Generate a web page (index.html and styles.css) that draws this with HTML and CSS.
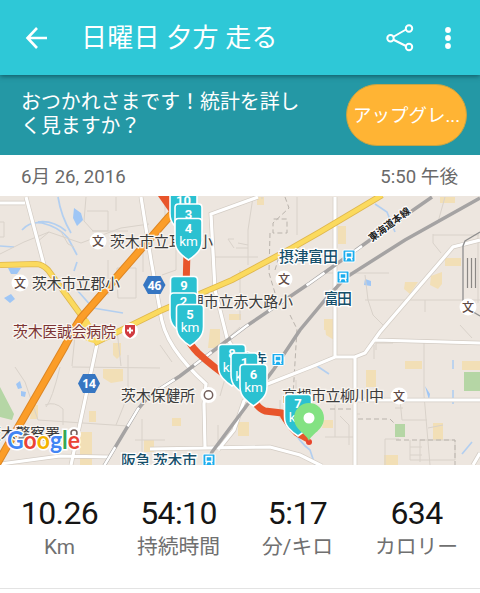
FILE: index.html
```html
<!DOCTYPE html>
<html lang="ja">
    <head>
        <meta charset="utf-8" />
        <meta name="viewport" content="width=device-width, initial-scale=1" />
        <title>日曜日 夕方 走る</title>
        <link rel="stylesheet" href="styles.css">
    </head>
    <body>
        <header class="app-bar">
            <svg class="back" width="24" height="24" viewBox="0 0 24 24">
                <path d="M22 12H3M12 2L2.500 12l9.500 10" />
            </svg>
            <h1>日曜日 夕方 走る</h1>
            <svg class="share" width="28" height="28" viewBox="0 0 28 28">
                <path d="M7 13l13-7.500M7 15.500l13 6.500" />
                <circle cx="4.500" cy="14.200" r="3.200" />
                <circle cx="23" cy="4.500" r="3.200" />
                <circle cx="23" cy="23" r="3.200" />
            </svg>
            <svg class="more" width="8" height="24" viewBox="0 0 8 24">
                <circle cx="4" cy="4" r="2.900" />
                <circle cx="4" cy="12" r="2.900" />
                <circle cx="4" cy="20" r="2.900" />
            </svg>
        </header>

        <section class="banner">
            <p>おつかれさまです！統計を詳し<br>く見ますか？</p>
            <button class="upgrade">アップグレ<span>...</span></button>
        </section>

        <div class="date-row">
            <span>6月 26, 2016</span>
            <span>5:50 午後</span>
        </div>

        <svg class="map" width="480" height="269" viewBox="0 196 480 269">
            <defs>
                <path id="pin" d="M-10-41.500h20q3.500 0 3.500 3.500v18.500q0 7-4 11.500-4 4.500-9.500 8-5.500-3.500-9.500-8-4-4.500-4-11.500v-18.500q0-3.500 3.500-3.500z" />
                <g id="school">
                    <circle r="8.500" fill="#fff" />
                    <text class="school-text" y="4.500">文</text>
                </g>
                <g id="station">
                    <rect x="-6" y="-6" width="12" height="12" rx="1" fill="#1badee" stroke="#fff" />
                    <path d="M-3.200 4.500l1.200-2.500M3.200 4.500L2 2M-3-3.500h6v5h-6z" fill="none" stroke="#fff" stroke-width="1.400" />
                </g>
            </defs>

            <!-- parks, blocks and water -->
            <path class="park" d="M0 387l14 27-2 6-12-3zM464 372h16v19h-16zM395 424h10v13h-10z" />
            <path class="block" d="M113 343h8v12l-4 4-4-4zM103 369h20v12l-12 2-8-5zM80 432h12v33H80zM32 405h6v14h-8zM210 329h10v19h-12zM172 418h9v8h-9zM238 422h11v14h-11zM366 370h10v17h-10zM405 361h17v8h-17zM462 361h18v9h-18zM433 423h10v17h-10zM384 455h14v10h-14zM445 258h16v8h-16zM431 276l11-4v12l-4 5-8-4zM405 282h13l-8 12-6-5zM338 226h8v18h-8zM440 197h15v6h-15zM229 314h12v6h-12zM257 197h7v8h-7zM324 319h10v11h-10zM325 325h9v15l-8-5zM324 420h9v8h-11zM144 440h10v12h-10zM89 411h7v11h-7z" />
            <path class="lake" d="M74 208l7 5 2 7-6 6-4-8zM8 268h13l-4 6h-6zM4 298l7-4 4 5-5 4zM365 279l6 2v5l-7-1zM16 384l4-3 2 7-4 1zM21 391l5 1-1 5-4-1zM425 386l5 8-1 6z" />
            <path class="stream" d="M22 230q8-9 20-7q17 4 26 15l9 17M38 222q15-2 28 9M58 197q3 19 13 36M77 262l-3 9M77 290l16 18 30 5M0 246l14 1M375 204l12 8 8 20M453 360v9M453 390v14M317 366l12 8M462 454l10-12M290 425q10 18 20 25l5 15" />

            <!-- side streets -->
            <path class="street" d="M0 254l24-12 25-10 32 11 40-15 28-4M49 232l-12 10M86 197l-2 24 9 10h15v-20h-21M116 197v14M92 231h36M108 260v35M117 278v-10h19v30h-18zM143 245v27M0 222h4v15H0M60 230l8 14 6 3M76 325l-4 41M72 367l88 1M60 367q-8 33-14 40M38 420l90 6M128 355v40l-12 30M117 330l4 36M15 367l10 15 13 38M45 405q10-4 18 4v16M142 419v46M135 440h30M165 197v24M176 230v40l-14 5M253 197l-5 33v35M238 243l10 2M236 248h12M234 239h-6l6 9M297 197v38M212 257h46M240 270v50M365 300h115M365 275l3 25 5 15 13 13M326 273h63M433 235h46M433 234v9l8 10M478 233v70M425 300v12M460 325l12 13M424 343v52l6 70M374 345v14M393 343h-17v7M445 197l-7 25M400 400l2 20h25M395 408h8M428 428l15-3M385 439v26M385 439h14M410 440v20M420 440v22M410 447h12M410 455h12M410 460h45v-20h-36M360 414h-6M340 416l9 9v20M325 437h30M335 405v32M218 425v20M245 350v15l20 12M262 197v2M280 400v20M296 400v-20M160 345l12 17M220 345l20-18M230 361l-10 35" />
            <path class="track" d="M285 197l4 11-16 15v10h14v-14h-15M270 233l-1 40 6 20M290 315l7 14-4 67M330 409h25M358 419h32l5 5M396 440h59v25M281 250l-6 20" />

            <!-- white roads -->
            <g class="road-edge">
                <path id="w1" d="M26 197l18 68M141 197l10 63 9 50q2 20 14 38t32 36l-2 20 1 43M97 344L85 400 71 465M258 197l-47 17 4 76 12 48 15 24 8 12M335 197v159M480 240l-27 7-73 85-15 21-10 4h-20l-24 10-46 18-21 16-10 29-16 20M355 357v108M375 340l105 3M354 400h126M150 449l56-1 64-1 30 8 22 11M0 464l60-8 50 1M480 453l-7 12M0 203h25" />
            </g>
            <use href="#w1" class="road" />
            <path class="outline-road" d="M480 232l-15 9-2 5v60l17 10" />

            <!-- railways -->
            <path class="rail" d="M432 197l-62 43-60 43-65 44-65 49-30 19-12 14-34 57M480 198l-75 42-60 38-20 22-25 30-26 39-62 83-5 13" />
            <path class="rail-dash" d="M362 246l-52 37-65 44-65 49-30 19-12 14-34 57" />

            <!-- main roads -->
            <path class="yellow-edge" d="M0 265l36-1q6 0 12 6l38 52 11 20 63-31 72-31 60-32 28-16 62-37" />
            <path class="yellow" d="M0 265l36-1q6 0 12 6l38 52 11 20 63-31 72-31 60-32 28-16 62-37" />
            <path class="yellow-fill" d="M80 319h8l10 18 12-2-12 9-8-2-14-6z" />
            <path class="orange-edge" d="M183 202l-15 16-87 100q-8 12-16 28L-3 464" />
            <path class="orange" d="M183 202l-15 16-87 100q-8 12-16 28L-3 464" />

            <!-- place names -->
            <g class="place">
                <text x="110" y="247" textLength="103">茨木市立耳原小</text>
                <text x="32" y="289" textLength="88">茨木市立郡小</text>
                <text x="174" y="307" textLength="119">高槻市立赤大路小</text>
                <text x="121" y="401" textLength="74">茨木保健所</text>
                <text x="282" y="401" textLength="102">高槻市立柳川中</text>
                <text x="-14" y="439" textLength="74">茨木警察署</text>
            </g>
            <text class="place hospital" x="13" y="337" textLength="103">茨木医誠会病院</text>
            <g class="place stop">
                <text x="279" y="261.500" textLength="59">摂津富田</text>
                <text x="324" y="304" textLength="28">富田</text>
                <text x="121" y="466" textLength="76">阪急 茨木市</text>
                <text x="223" y="365" textLength="44">総持寺</text>
            </g>
            <text class="line-name" transform="translate(372 242) rotate(-37)" textLength="49">東海道本線</text>

            <use href="#school" x="98" y="241" />
            <use href="#school" x="20" y="283" />
            <use href="#school" x="284" y="279" />
            <use href="#school" x="468" y="307" />
            <use href="#school" x="399" y="396" />
            <use href="#station" x="349" y="256" />
            <use href="#station" x="343" y="277" />
            <use href="#station" x="278" y="359.500" />
            <use href="#station" x="209" y="460" />
            <g class="dots">
                <circle cx="208.500" cy="395" r="8" class="dot-bg" />
                <circle cx="208.500" cy="395" r="4.200" />
                <circle cx="74" cy="434" r="7" class="dot-bg" />
                <circle cx="74" cy="433" r="3" />
            </g>
            <circle cx="130" cy="331" r="8" fill="#fff" />
            <path d="M125 325h10v7q0 3-5 6q-5-3-5-6z" fill="#d13b40" />
            <path d="M130 327.500v6M127 330.500h6" stroke="#fff" stroke-width="2" />

            <g class="shield">
                <path d="M143 285l5-9h12.500l5 9-5 9H148z" />
                <text x="154.500" y="289.500">46</text>
                <path d="M78 383.500l5-9.500h12l5 9.500-5 9.500H83z" />
                <text x="89" y="388">14</text>
            </g>

            <!-- run route -->
            <path d="M158 196h14v20z" fill="#e8552b" />
            <path class="route" d="M187 250l-1 40v45q3 9 12 18 15 14 37 29l20 20q4 7 10 9l17 2q6 11 15 20l11 6" />

            <!-- kilometre markers -->
            <g class="marker">
                <g transform="translate(183.500 233)"><use href="#pin" /><text y="-28">10</text></g>
                <g transform="translate(188.500 245.500)"><use href="#pin" /><text y="-27">3</text></g>
                <g transform="translate(188.500 260)"><use href="#pin" /><text y="-27.500">4</text><text class="km" y="-14">km</text></g>
                <g transform="translate(184 318)"><use href="#pin" /><text y="-28.500">9</text></g>
                <g transform="translate(183.500 334.500)"><use href="#pin" /><text y="-28.500">2</text></g>
                <g transform="translate(190 346)"><use href="#pin" /><text y="-27.500">5</text><text class="km" y="-14">km</text></g>
                <g transform="translate(232 386)"><use href="#pin" /><text y="-28">8</text><text class="km" y="-14">km</text></g>
                <g transform="translate(244.500 394.500)"><use href="#pin" /><text y="-28">1</text><text class="km" y="-14">km</text></g>
                <g transform="translate(253.500 406)"><use href="#pin" /><text y="-27.500">6</text><text class="km" y="-14">km</text></g>
                <g transform="translate(298 436)"><use href="#pin" /><text y="-28">7</text><text class="km" y="-14">km</text></g>
            </g>
            <circle cx="309" cy="442" r="3" fill="#e8442b" />
            <path d="M309 441c-2-7-15-11-15-23a15 15 0 0 1 30 0c0 12-13 16-15 23z" fill="#83e283" />
            <circle cx="309" cy="418" r="5.500" fill="#fff" />

            <path class="grip" d="M467.500 258v30M471.500 258v30M475.500 258v30" />

            <text class="google" x="7" y="449" textLength="73" lengthAdjust="spacingAndGlyphs"><tspan fill="#4285f4">G</tspan><tspan fill="#ea4335">o</tspan><tspan fill="#f4b400">o</tspan><tspan fill="#4285f4">g</tspan><tspan fill="#34a853">l</tspan><tspan fill="#ea4335">e</tspan></text>
        </svg>

        <section class="stats">
            <div class="stat"><strong>10.26</strong><span>Km</span></div>
            <div class="stat"><strong>54:10</strong><span>持続時間</span></div>
            <div class="stat"><strong>5:17</strong><span>分/キロ</span></div>
            <div class="stat"><strong>634</strong><span>カロリー</span></div>
        </section>
    </body>
</html>
```
FILE: styles.css
```css
* {
    box-sizing: border-box;
}

body {
    margin: 0;
    height: 593px;
    overflow: hidden;
    font-family: Roboto, "Noto Sans CJK JP", sans-serif;
    background: #fff;
}

.app-bar {
    position: relative;
    display: flex;
    align-items: center;
    height: 75px;
    padding: 0 28px 0 25px;
    background: #2ec8d7;
    box-shadow: 0 1px 5px rgba(0, 40, 50, 0.6);
    color: #fff;
}

.app-bar h1 {
    flex: 1;
    margin: 0 0 0 32px;
    font-size: 26px;
    font-weight: 400;
    line-height: 36px;
    letter-spacing: 0.2px;
}

.back,
.share {
    fill: none;
    stroke: #fff;
    stroke-width: 2.6;
}

.share {
    stroke-width: 2;
    margin-right: 30px;
}

.more {
    fill: #fff;
}

.banner {
    display: flex;
    align-items: center;
    justify-content: space-between;
    height: 80px;
    padding: 0 13px 0 21px;
    background: #2498a5;
    color: #fff;
}

.banner p {
    margin: 0;
    font-size: 19.9px;
    line-height: 24px;
    white-space: nowrap;
}

.upgrade {
    width: 121px;
    height: 62px;
    padding: 0 0 2px;
    border: 1px solid #c5a445;
    border-radius: 31px;
    background: #ffb434;
    color: #fff;
    font-family: inherit;
    font-size: 18.5px;
    white-space: nowrap;
}

.date-row {
    display: flex;
    align-items: center;
    justify-content: space-between;
    height: 41px;
    padding: 0 22px 2px 21px;
    color: #6a6a6a;
    font-size: 18.6px;
}

.map {
    display: block;
    background: #ede6df;
    font-family: "Noto Sans CJK JP", sans-serif;
}

.park {
    fill: #b5d6a5;
}

.block {
    fill: #f2dfb6;
}

.lake {
    fill: #9fc6f5;
}

.stream,
.street,
.track,
.road,
.road-edge,
.outline-road,
.rail,
.rail-dash,
.yellow,
.yellow-edge,
.orange,
.orange-edge,
.route,
.grip {
    fill: none;
}

.stream {
    stroke: #b3cff0;
    stroke-width: 1.7;
}

.street {
    stroke: #d9d2ca;
}

.track {
    stroke: #b9b3ac;
    stroke-dasharray: 5 3;
}

.road-edge {
    stroke: #d3ccc4;
    stroke-width: 4.6;
}

.road {
    stroke: #fff;
    stroke-width: 3.2;
}

.outline-road {
    stroke: #8f8f8f;
    stroke-width: 1.3;
}

.rail {
    stroke: #a5a3a3;
    stroke-width: 3.5;
}

.rail-dash {
    stroke: #fff;
    stroke-width: 2.5;
    stroke-dasharray: 22 24;
}

.yellow-edge {
    stroke: #dfb74e;
    stroke-width: 6.2;
}

.yellow {
    stroke: #fbda5e;
    stroke-width: 4.5;
}

.yellow-fill {
    fill: #fbda5e;
}

.orange-edge {
    stroke: #dd8624;
    stroke-width: 8;
}

.orange {
    stroke: #fb9d28;
    stroke-width: 6;
}

.place {
    fill: #3b3b3b;
    stroke: #f8f4ef;
    stroke-width: 2.5px;
    paint-order: stroke;
    font-size: 15px;
}

.hospital {
    fill: #7c3434;
}

.stop {
    fill: #17506b;
    stroke: #fff;
    font-weight: 500;
}

.line-name {
    fill: #222;
    stroke: #fff;
    stroke-width: 2px;
    paint-order: stroke;
    font-size: 10px;
    font-weight: 700;
}

.school-text {
    fill: #5f4a45;
    font-size: 12px;
    font-weight: 500;
    text-anchor: middle;
}

.dots {
    fill: none;
    stroke: #74605c;
    stroke-width: 1.5;
}

.dots .dot-bg {
    fill: #fff;
    stroke: none;
}

.shield path {
    fill: #3676c2;
}

.shield text {
    fill: #fff;
    font-family: "Open Sans", sans-serif;
    font-size: 12px;
    font-weight: 700;
    text-anchor: middle;
}

.route {
    stroke: #e8552b;
    stroke-width: 7;
    stroke-linejoin: round;
}

.marker use {
    fill: #2bc1d1;
    stroke: #fff;
    stroke-width: 1.6;
}

.marker text {
    fill: #fff;
    font-family: Roboto, sans-serif;
    font-size: 13px;
    font-weight: 700;
    text-anchor: middle;
}

.marker .km {
    font-size: 13.5px;
    font-weight: 400;
}

.grip {
    stroke: #8b8885;
    stroke-width: 1.2;
}

.google {
    font-family: Lato, sans-serif;
    font-size: 25px;
    font-weight: 700;
    stroke: #fff;
    stroke-width: 3px;
    paint-order: stroke;
}

.stats {
    display: grid;
    grid-template-columns: repeat(4, 119px);
    height: 124px;
    padding-top: 30px;
    border-bottom: 1px solid #e3e3e3;
    text-align: center;
}

.stat strong,
.stat span {
    display: block;
}

.stat strong {
    color: #151515;
    font-size: 32px;
    font-weight: 400;
    line-height: 37px;
    letter-spacing: -0.6px;
}

.stat span {
    color: #707070;
    font-size: 20.8px;
    font-weight: 400;
    line-height: 31px;
}
```
